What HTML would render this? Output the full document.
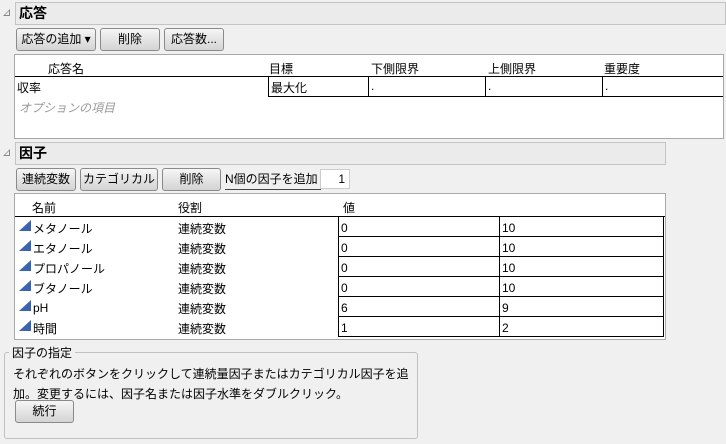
<!DOCTYPE html>
<html><head><meta charset="utf-8"><style>
*{margin:0;padding:0;box-sizing:border-box}
body{width:726px;height:444px;background:#f0f0f0;position:relative;overflow:hidden;font-family:"Liberation Sans","Noto Sans CJK JP",sans-serif;font-size:12px;color:#000}
.a{position:absolute}
.hdr{position:absolute;background:#ebebeb;border:1px solid #c4c4c4;font-weight:bold;font-size:14px;padding-left:3px;line-height:20px}
.tri{position:absolute;width:0;height:0;border-left:7px solid transparent;border-bottom:7px solid #888}
.tri:after{content:"";position:absolute;left:-5px;top:2px;border-left:4px solid transparent;border-bottom:4px solid #f0f0f0}
.btn{position:absolute;height:23px;border:1px solid #8a8a8a;border-radius:3px;background:linear-gradient(#f6f6f6,#e4e4e4 50%,#d4d4d4);text-align:center;line-height:21px;font-size:12px}
.box{position:absolute;background:#fff;border:1px solid #a8a8a8}
.hl{position:absolute;height:1px;background:#000}
.vl{position:absolute;width:1px;background:#000}
.ic{position:absolute;width:12px;height:11px}
</style></head><body>
<div class="tri" style="left:3px;top:9px"></div>
<div class="hdr" style="left:15px;top:2px;width:711px;height:23px">応答</div>
<div class="btn" style="left:16px;top:28px;width:80px">応答の追加 ▾</div>
<div class="btn" style="left:100px;top:28px;width:60px">削除</div>
<div class="btn" style="left:164px;top:28px;width:60px">応答数...</div>
<div class="box" style="left:14px;top:54px;width:710px;height:85px"></div>
<div class="a" style="left:48px;top:60px">応答名</div>
<div class="a" style="left:269px;top:60px">目標</div>
<div class="a" style="left:371px;top:60px">下側限界</div>
<div class="a" style="left:488px;top:60px">上側限界</div>
<div class="a" style="left:604px;top:60px">重要度</div>
<div class="hl" style="left:15px;top:76px;width:708px"></div>
<div class="hl" style="left:268px;top:96px;width:455px"></div>
<div class="vl" style="left:268px;top:76px;height:21px"></div>
<div class="vl" style="left:368px;top:76px;height:21px"></div>
<div class="vl" style="left:485px;top:76px;height:21px"></div>
<div class="vl" style="left:602px;top:76px;height:21px"></div>
<div class="a" style="left:17px;top:79px">収率</div>
<div class="a" style="left:271px;top:79px">最大化</div>
<div class="a" style="left:371px;top:79px">.</div>
<div class="a" style="left:488px;top:79px">.</div>
<div class="a" style="left:605px;top:79px">.</div>
<div class="a" style="left:19px;top:99px;color:#999;font-style:italic">オプションの項目</div>

<div class="tri" style="left:3px;top:149px"></div>
<div class="hdr" style="left:15px;top:142px;width:651px;height:23px">因子</div>
<div class="btn" style="left:16px;top:168px;width:60px">連続変数</div>
<div class="btn" style="left:80px;top:168px;width:78px">カテゴリカル</div>
<div class="btn" style="left:162px;top:168px;width:59px">削除</div>
<div class="a" style="left:225px;top:170px">N個の因子を追加</div>
<div class="hl" style="left:225px;top:189px;width:96px;background:#444"></div>
<div class="a" style="left:320px;top:169px;width:30px;height:20px;background:#fff;border:1px solid #ccc;text-align:right;padding-right:4px;line-height:18px">1</div>
<div class="box" style="left:14px;top:193px;width:652px;height:147px"></div>
<div class="a" style="left:32px;top:199px">名前</div>
<div class="a" style="left:178px;top:199px">役割</div>
<div class="a" style="left:343px;top:199px">値</div>
<div class="hl" style="left:15px;top:216px;width:650px"></div>
<div class="vl" style="left:338px;top:216px;height:121px"></div>
<div class="vl" style="left:499px;top:216px;height:121px"></div>
<div class="vl" style="left:663px;top:216px;height:121px"></div>
<div class="hl" style="left:338px;top:236px;width:326px"></div>
<div class="hl" style="left:338px;top:256px;width:326px"></div>
<div class="hl" style="left:338px;top:276px;width:326px"></div>
<div class="hl" style="left:338px;top:296px;width:326px"></div>
<div class="hl" style="left:338px;top:316px;width:326px"></div>
<div class="hl" style="left:338px;top:336px;width:326px"></div>

<svg class="ic" style="left:19px;top:220px" viewBox="0 0 12 11"><path d="M0 11L12 0V11Z" fill="#3a64b0"/></svg><div class="a" style="left:33px;top:220px">メタノール</div><div class="a" style="left:178px;top:220px">連続変数</div><div class="a" style="left:341px;top:221px">0</div><div class="a" style="left:502px;top:221px">10</div>
<svg class="ic" style="left:19px;top:240px" viewBox="0 0 12 11"><path d="M0 11L12 0V11Z" fill="#3a64b0"/></svg><div class="a" style="left:33px;top:240px">エタノール</div><div class="a" style="left:178px;top:240px">連続変数</div><div class="a" style="left:341px;top:241px">0</div><div class="a" style="left:502px;top:241px">10</div>
<svg class="ic" style="left:19px;top:260px" viewBox="0 0 12 11"><path d="M0 11L12 0V11Z" fill="#3a64b0"/></svg><div class="a" style="left:33px;top:260px">プロパノール</div><div class="a" style="left:178px;top:260px">連続変数</div><div class="a" style="left:341px;top:261px">0</div><div class="a" style="left:502px;top:261px">10</div>
<svg class="ic" style="left:19px;top:280px" viewBox="0 0 12 11"><path d="M0 11L12 0V11Z" fill="#3a64b0"/></svg><div class="a" style="left:33px;top:280px">ブタノール</div><div class="a" style="left:178px;top:280px">連続変数</div><div class="a" style="left:341px;top:281px">0</div><div class="a" style="left:502px;top:281px">10</div>
<svg class="ic" style="left:19px;top:300px" viewBox="0 0 12 11"><path d="M0 11L12 0V11Z" fill="#3a64b0"/></svg><div class="a" style="left:33px;top:301px">pH</div><div class="a" style="left:178px;top:300px">連続変数</div><div class="a" style="left:341px;top:301px">6</div><div class="a" style="left:502px;top:301px">9</div>
<svg class="ic" style="left:19px;top:320px" viewBox="0 0 12 11"><path d="M0 11L12 0V11Z" fill="#3a64b0"/></svg><div class="a" style="left:33px;top:320px">時間</div><div class="a" style="left:178px;top:320px">連続変数</div><div class="a" style="left:341px;top:321px">1</div><div class="a" style="left:502px;top:321px">2</div>

<div class="a" style="left:4px;top:352px;width:414px;height:87px;border:1px solid #c0c0c0;border-radius:3px"></div>
<div class="a" style="left:9px;top:344px;background:#f0f0f0;padding:0 3px">因子の指定</div>
<div class="a" style="left:13px;top:364px;line-height:20px">それぞれのボタンをクリックして連続量因子またはカテゴリカル因子を追<br>加。変更するには、因子名または因子水準をダブルクリック。</div>
<div class="btn" style="left:15px;top:400px;width:59px">続行</div>
</body></html>
